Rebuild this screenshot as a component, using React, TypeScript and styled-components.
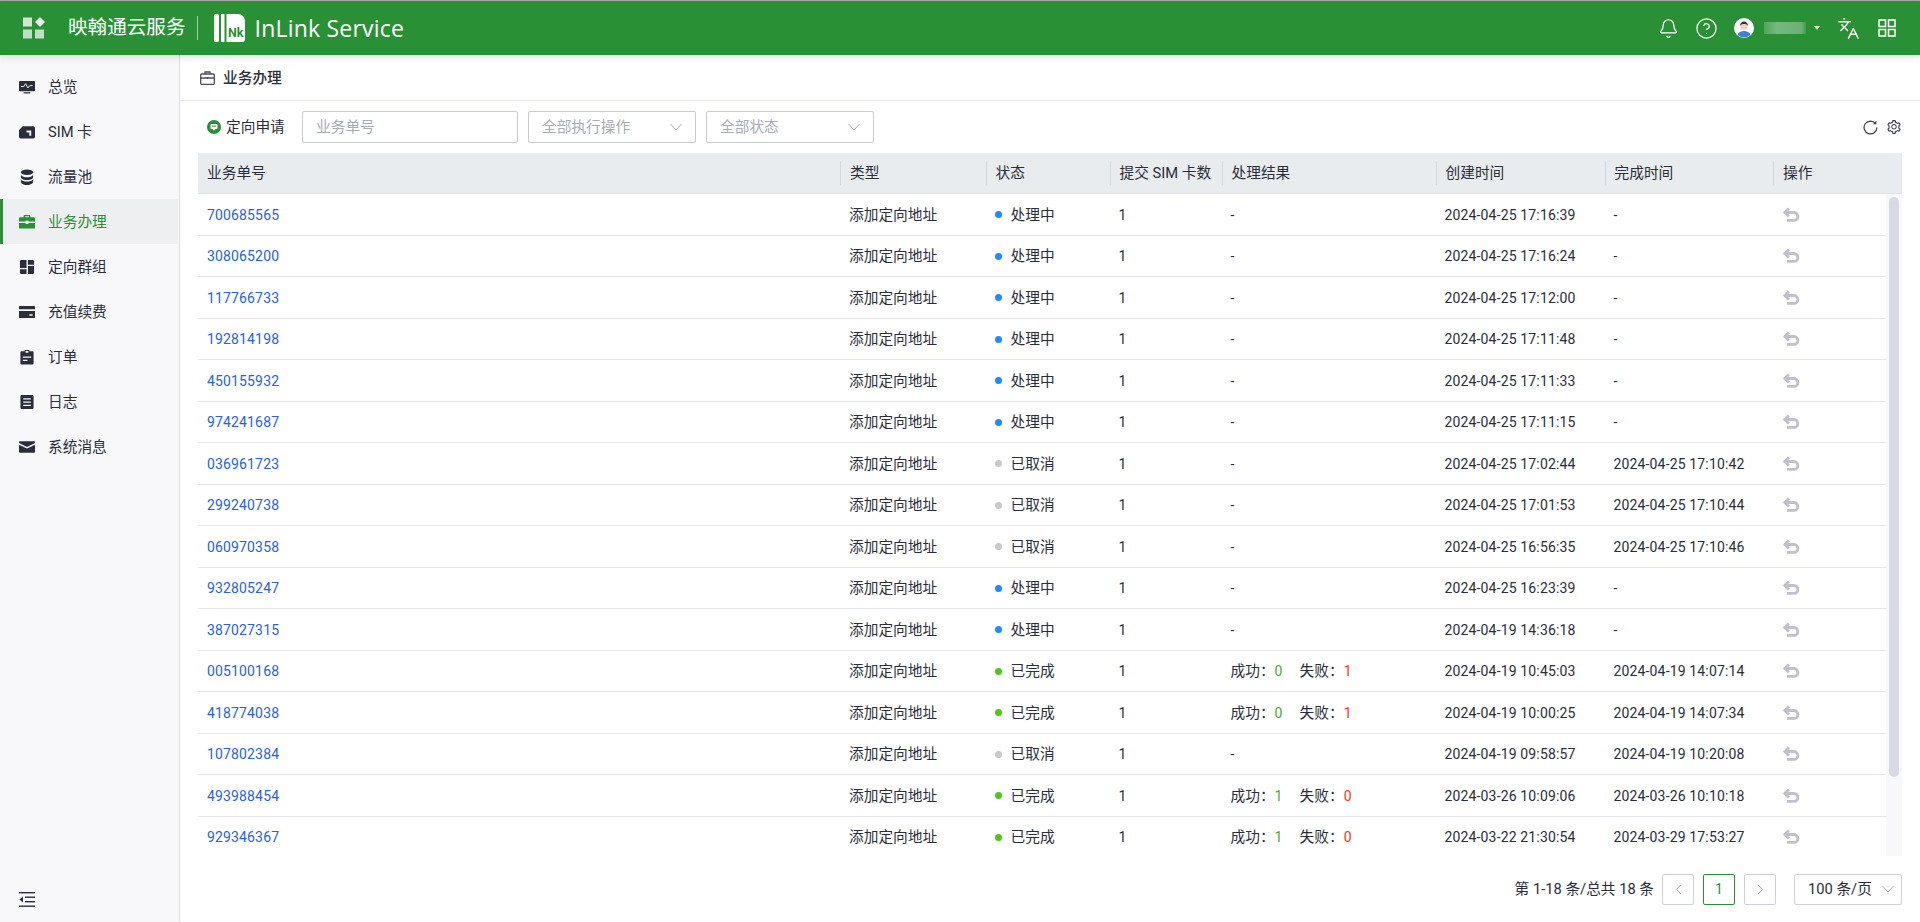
import React from 'react';
import styled, { createGlobalStyle } from 'styled-components';
import { Bell, CircleHelp, Languages, ChevronLeft, ChevronRight } from 'lucide-react';
import { AiOutlineSetting } from 'react-icons/ai';

const GlobalStyle = createGlobalStyle`
  html, body {
    margin: 0;
    padding: 0;
    height: 100%;
    overflow: hidden;
    background: #fff;
  }
  body {
    font-family: Roboto, "Noto Sans CJK SC", sans-serif;
    font-size: 14.7px;
    line-height: 22px;
    color: #2b2d3b;
  }
  * {
    box-sizing: border-box;
  }
`;

const COLUMNS = '642px 145.5px 124px 112px 214px 169px 168.5px 1fr';

const Page = styled.div`
  display: flex;
  flex-direction: column;
  height: 922px;
  border-top: 1px solid #a9aca9;
`;

const TopBar = styled.header`
  position: relative;
  z-index: 2;
  flex: none;
  display: flex;
  align-items: center;
  height: 54px;
  padding: 0 24px 0 23px;
  background: #2a9036;
  box-shadow: 0 2px 8px rgba(0, 0, 0, 0.12);
  color: #fff;
`;

const BrandName = styled.div`
  margin-left: 23px;
  font-size: 19.6px;
  line-height: 28px;
  white-space: nowrap;
`;

const BrandDivider = styled.div`
  width: 1px;
  height: 24px;
  margin: 0 16px 0 11px;
  background: rgba(255, 255, 255, 0.55);
`;

const LogoText = styled.div`
  margin-left: 10px;
  font-family: "Open Sans", sans-serif;
  font-size: 23px;
  line-height: 30px;
  letter-spacing: 0.2px;
  white-space: nowrap;
`;

const TopActions = styled.div`
  display: flex;
  align-items: center;
  margin-left: auto;
`;

const Avatar = styled.svg`
  width: 20px;
  height: 20px;
  margin-left: 16px;
`;

const HelpIcon = styled(CircleHelp)`
  margin-left: 16px;
`;

const GridSlot = styled.span`
  display: flex;
  margin-left: 18px;
`;

const HiddenName = styled.div`
  width: 42px;
  height: 12px;
  margin-left: 10px;
  background: linear-gradient(90deg, rgba(255, 255, 255, 0.18), rgba(255, 255, 255, 0.36) 30%, rgba(255, 255, 255, 0.3) 90%, rgba(255, 255, 255, 0.1));
`;

const Caret = styled.div`
  width: 0;
  height: 0;
  margin: 0 17px 0 8px;
  border-left: 3.5px solid transparent;
  border-right: 3.5px solid transparent;
  border-top: 4px solid rgba(255, 255, 255, 0.8);
`;

const Body = styled.div`
  flex: 1;
  min-height: 0;
  display: flex;
`;

const Sidebar = styled.aside`
  flex: none;
  display: flex;
  flex-direction: column;
  width: 180px;
  padding: 9px 1px 15px 0;
  background: #f8f8fb;
  border-right: 1px solid #dcdde3;
`;

const NavItem = styled.div<{ $active?: boolean }>`
  display: flex;
  align-items: center;
  gap: 13px;
  height: 45px;
  padding-left: ${(p) => (p.$active ? '16px' : '19px')};
  border-left: ${(p) => (p.$active ? '3px solid #2a9036' : '0')};
  background: ${(p) => (p.$active ? '#eeeff1' : 'transparent')};
  color: ${(p) => (p.$active ? '#2a9036' : '#2b2d3b')};
`;

const NavIcon = styled.svg`
  flex: none;
  width: 16px;
  height: 16px;
  fill: currentColor;
`;

const CollapseButton = styled.div`
  display: flex;
  margin-top: auto;
  padding-left: 19px;
  color: #2b2d3b;
`;

const Main = styled.main`
  flex: 1;
  min-width: 0;
  display: flex;
  flex-direction: column;
`;

const TitleBar = styled.div`
  flex: none;
  display: flex;
  align-items: center;
  gap: 8px;
  height: 46px;
  padding-left: 20px;
  border-bottom: 1px solid #e8e9ee;
  font-weight: 500;
  color: #2b2d3b;
`;

const Toolbar = styled.div`
  flex: none;
  display: flex;
  align-items: center;
  height: 52px;
  padding: 0 18px 0 27px;
`;

const ApplyButton = styled.div`
  display: flex;
  align-items: center;
  gap: 5px;
  width: 95px;
  white-space: nowrap;
`;

const Field = styled.div<{ $width: number }>`
  display: flex;
  align-items: center;
  justify-content: space-between;
  width: ${(p) => p.$width}px;
  height: 32px;
  margin-right: 10px;
  padding: 0 13px;
  border: 1px solid #c8cad4;
  border-radius: 2px;
  color: #a9abb6;
  background: #fff;
`;

const ToolIcons = styled.div`
  display: flex;
  align-items: center;
  gap: 8px;
  margin-left: auto;
  color: #3a3d4c;
`;

const TableHead = styled.div`
  flex: none;
  display: grid;
  grid-template-columns: ${COLUMNS};
  align-items: center;
  height: 41px;
  margin: 0 18px;
  background: #e9ecef;
  border-bottom: 1px solid #e0e2e8;
`;

const HeadCell = styled.div<{ $first?: boolean }>`
  height: 24px;
  padding-left: 9px;
  border-left: ${(p) => (p.$first ? '0' : '1px solid #d6d8de')};
  line-height: 24px;
  white-space: nowrap;
`;

const TableBody = styled.div`
  flex: 1;
  min-height: 0;
  display: flex;
  margin: 0 18px;
`;

const RowList = styled.div`
  flex: 1;
  min-width: 0;
  overflow: hidden;
`;

const ScrollTrack = styled.div`
  flex: none;
  width: 16px;
  padding: 3px;
  background: #f8f8fa;
`;

const ScrollThumb = styled.div`
  width: 10px;
  height: 580px;
  border-radius: 5px;
  background: #d7d9e6;
`;

const Row = styled.div`
  display: grid;
  grid-template-columns: ${COLUMNS};
  align-items: center;
  height: 41.5px;
  padding-top: 1px;
  border-bottom: 1px solid #e6e7ee;
`;

const Cell = styled.div`
  padding-left: 9px;
  white-space: nowrap;
`;

const Num = styled.span`
  font-size: 14px;
  letter-spacing: 0.15px;
`;

const OrderLink = styled(Num)`
  color: #2d62d6;
`;

const StatusCell = styled(Cell)`
  display: flex;
  align-items: center;
  gap: 9px;
`;

const Dot = styled.span<{ $color: string }>`
  width: 7px;
  height: 7px;
  border-radius: 50%;
  background: ${(p) => p.$color};
`;

const Count = styled(Num)<{ $color: string }>`
  color: ${(p) => p.$color};
`;

const FailLabel = styled.span`
  margin-left: 17px;
`;

const Footer = styled.div`
  flex: none;
  display: flex;
  align-items: center;
  justify-content: flex-end;
  height: 66px;
  padding: 0 18px 0 0;
`;

const Summary = styled.span`
  margin-right: 8px;
`;

const PageButton = styled.div<{ $active?: boolean }>`
  display: flex;
  align-items: center;
  justify-content: center;
  width: 32px;
  height: 31px;
  margin-left: ${(p) => (p.$active ? '9px' : '0')};
  margin-right: ${(p) => (p.$active ? '9px' : '0')};
  border: 1px solid ${(p) => (p.$active ? '#2a9036' : '#cfd1da')};
  border-radius: 2px;
  color: ${(p) => (p.$active ? '#2a9036' : '#8f919e')};
`;

const PageSize = styled.div`
  display: flex;
  align-items: center;
  justify-content: space-between;
  width: 108px;
  height: 31px;
  margin-left: 18px;
  padding: 0 7px 0 13px;
  border: 1px solid #cfd1da;
  border-radius: 2px;
`;

const ChevronSvg = styled.svg<{ $muted?: boolean }>`
  flex: none;
  width: 12px;
  height: 8px;
  fill: none;
  stroke: ${(p) => (p.$muted ? '#a9abb6' : 'currentColor')};
  stroke-width: 1;
`;

const Chevron = ({ muted }: { muted?: boolean }) => (
  <ChevronSvg viewBox="0 0 12 8" $muted={muted}>
    <polyline points="0.5,1 6,7 11.5,1" />
  </ChevronSvg>
);

const UndoSvg = styled.svg`
  display: block;
  width: 18px;
  height: 16px;
  fill: none;
  stroke: #bfc0ca;
  stroke-width: 2.8;
`;

const UndoIcon = () => (
  <UndoSvg viewBox="0 0 18 16">
    <path d="M6.8 1.5 L2.8 5.5 L6.8 9.5" />
    <path d="M3 5.5 H12 a3.8 3.8 0 0 1 0 7.8 H5" />
  </UndoSvg>
);

const BrandMark = () => (
  <svg width="22" height="22" viewBox="0 0 22 22">
    <rect x="0" y="0.5" width="9" height="9" fill="#fff" fillOpacity="0.78" />
    <polygon points="17,0 22,5 17,10 12,5" fill="#fff" fillOpacity="0.9" />
    <rect x="0" y="12.5" width="9" height="9" fill="#fff" fillOpacity="0.7" />
    <rect x="12" y="12.5" width="9" height="9" fill="#fff" fillOpacity="0.7" />
  </svg>
);

const InLinkMark = () => (
  <svg width="31" height="28" viewBox="0 0 31 28">
    <rect x="0" y="0" width="5" height="28" rx="1.5" fill="#fff" />
    <rect x="7" y="0" width="3.5" height="28" fill="#fff" />
    <path d="M12.5 0 H24 a7 7 0 0 1 7 7 V25 a3 3 0 0 1 -3 3 H12.5 Z" fill="#fff" />
    <text x="14" y="23" fontFamily="Roboto, sans-serif" fontWeight="700" fontSize="12.5" fill="#2a9036">Nk</text>
  </svg>
);

const AppGridIcon = () => (
  <svg width="18" height="18" viewBox="0 0 18 18" fill="none" stroke="#fff" strokeWidth="1.5">
    <rect x="1" y="1" width="6.5" height="6.5" />
    <rect x="10.5" y="1" width="6.5" height="6.5" />
    <rect x="1" y="10.5" width="6.5" height="6.5" />
    <rect x="10.5" y="10.5" width="6.5" height="6.5" />
  </svg>
);

const RefreshIcon = () => (
  <svg width="15" height="15" viewBox="0 0 15 15" fill="none" stroke="currentColor" strokeWidth="1.2">
    <path d="M12.6 3.6 A6.4 6.4 0 1 0 13.9 7.5" />
    <path d="M13.4 0.8 V4.2 H10" fill="currentColor" stroke="none" />
  </svg>
);

const BriefcaseOutline = () => (
  <svg width="15" height="14" viewBox="0 0 15 14" fill="none" stroke="#4a4d5c" strokeWidth="1.3">
    <rect x="0.7" y="3" width="13.6" height="10.3" rx="1" />
    <path d="M5 3 V1 H10 V3 M0.7 7 H14.3 M7.5 6 V8" />
  </svg>
);

const navIcons: Record<string, React.ReactNode> = {
  overview: (
    <>
      <path d="M1 2 h15 a1 1 0 0 1 1 1 v9 a1 1 0 0 1 -1 1 h-15 a1 1 0 0 1 -1 -1 v-9 a1 1 0 0 1 1 -1 Z M5 14 h7 v1.5 h-7 Z" />
      <path d="M2 8 h3 l2 -3 l2.5 4.5 l2 -2.5 h3" fill="none" stroke="#f8f8fb" strokeWidth="1" />
    </>
  ),
  sim: (
    <path fillRule="evenodd" d="M4 2.5 h11 a2 2 0 0 1 2 2 v9 a2 2 0 0 1 -2 2 h-13 a2 2 0 0 1 -2 -2 v-7 Z M8 7 h5 v5.5 h-2 v-3.5 h-3 Z" />
  ),
  pool: (
    <>
      <ellipse cx="8.5" cy="3.5" rx="6.5" ry="3" />
      <path d="M2 6 c1 2 4 2.8 6.5 2.8 s5.5 -.8 6.5 -2.8 v3 c-.6 2 -4 2.8 -6.5 2.8 s-5.9 -.8 -6.5 -2.8 Z" />
      <path d="M2 11 c1 2 4 2.4 6.5 2.4 s5.5 -.4 6.5 -2.4 v3 c-.6 2 -4 3 -6.5 3 s-5.9 -1 -6.5 -3 Z" />
    </>
  ),
  business: (
    <path fillRule="evenodd" d="M6 1 h5 a1 1 0 0 1 1 1 v1.5 h4 a1 1 0 0 1 1 1 v3.5 h-7 v-1 h-3 v1 h-7 v-3.5 a1 1 0 0 1 1 -1 h4 v-1.5 a1 1 0 0 1 1 -1 Z M6.5 2.3 v1.2 h4 v-1.2 Z M0 9.5 h7 v1 h3 v-1 h7 v5 a1 1 0 0 1 -1 1 h-15 a1 1 0 0 1 -1 -1 Z" />
  ),
  group: (
    <>
      <path d="M2.5 1 h5.5 v8.5 h-7 v-7 a1.5 1.5 0 0 1 1.5 -1.5 Z" />
      <path d="M9.5 1 h5 a1.5 1.5 0 0 1 1.5 1.5 v3.5 h-6.5 Z" />
      <path d="M9.5 7.5 h6.5 v7 a1.5 1.5 0 0 1 -1.5 1.5 h-5 Z" />
      <path d="M1 11 h7 v5 h-5.5 a1.5 1.5 0 0 1 -1.5 -1.5 Z" />
    </>
  ),
  topup: (
    <path fillRule="evenodd" d="M1 2 h15 a1 1 0 0 1 1 1 v2.5 h-17 v-2.5 a1 1 0 0 1 1 -1 Z M0 7.5 h17 v6.5 a1 1 0 0 1 -1 1 h-15 a1 1 0 0 1 -1 -1 Z M11 11 v1.5 h3.5 v-1.5 Z" />
  ),
  order: (
    <path fillRule="evenodd" d="M6 1 h5 v1.5 h3.5 a1 1 0 0 1 1 1 v12 a1 1 0 0 1 -1 1 h-12 a1 1 0 0 1 -1 -1 v-12 a1 1 0 0 1 1 -1 h3.5 Z M7 2 v2 h3 v-2 Z M4 8 v1.3 h9 v-1.3 Z M4 11.5 v1.3 h5 v-1.3 Z" />
  ),
  log: (
    <path fillRule="evenodd" d="M3 1 h11 a1.5 1.5 0 0 1 1.5 1.5 v12 a1.5 1.5 0 0 1 -1.5 1.5 h-11 a1.5 1.5 0 0 1 -1.5 -1.5 v-12 a1.5 1.5 0 0 1 1.5 -1.5 Z M4.5 4.5 v1.3 h8 v-1.3 Z M4.5 8 v1.3 h8 v-1.3 Z M4.5 11.5 v1.3 h8 v-1.3 Z" />
  ),
  message: (
    <path d="M1 2.5 h15 a1 1 0 0 1 1 1 v.8 l-8.5 4.2 l-8.5 -4.2 v-.8 a1 1 0 0 1 1 -1 Z M0 6 l8.5 4.2 l8.5 -4.2 v7.5 a1 1 0 0 1 -1 1 h-15 a1 1 0 0 1 -1 -1 Z" />
  ),
};

const navItems = [
  { key: 'overview', label: '总览' },
  { key: 'sim', label: 'SIM 卡' },
  { key: 'pool', label: '流量池' },
  { key: 'business', label: '业务办理', active: true },
  { key: 'group', label: '定向群组' },
  { key: 'topup', label: '充值续费' },
  { key: 'order', label: '订单' },
  { key: 'log', label: '日志' },
  { key: 'message', label: '系统消息' },
];

const statusColors: Record<string, string> = {
  处理中: '#1f8bff',
  已取消: '#c8c9ce',
  已完成: '#52c41a',
};

type Order = {
  id: string;
  status: string;
  ok?: number;
  fail?: number;
  created: string;
  done: string;
};

const orders: Order[] = [
  { id: '700685565', status: '处理中', created: '2024-04-25 17:16:39', done: '-' },
  { id: '308065200', status: '处理中', created: '2024-04-25 17:16:24', done: '-' },
  { id: '117766733', status: '处理中', created: '2024-04-25 17:12:00', done: '-' },
  { id: '192814198', status: '处理中', created: '2024-04-25 17:11:48', done: '-' },
  { id: '450155932', status: '处理中', created: '2024-04-25 17:11:33', done: '-' },
  { id: '974241687', status: '处理中', created: '2024-04-25 17:11:15', done: '-' },
  { id: '036961723', status: '已取消', created: '2024-04-25 17:02:44', done: '2024-04-25 17:10:42' },
  { id: '299240738', status: '已取消', created: '2024-04-25 17:01:53', done: '2024-04-25 17:10:44' },
  { id: '060970358', status: '已取消', created: '2024-04-25 16:56:35', done: '2024-04-25 17:10:46' },
  { id: '932805247', status: '处理中', created: '2024-04-25 16:23:39', done: '-' },
  { id: '387027315', status: '处理中', created: '2024-04-19 14:36:18', done: '-' },
  { id: '005100168', status: '已完成', ok: 0, fail: 1, created: '2024-04-19 10:45:03', done: '2024-04-19 14:07:14' },
  { id: '418774038', status: '已完成', ok: 0, fail: 1, created: '2024-04-19 10:00:25', done: '2024-04-19 14:07:34' },
  { id: '107802384', status: '已取消', created: '2024-04-19 09:58:57', done: '2024-04-19 10:20:08' },
  { id: '493988454', status: '已完成', ok: 1, fail: 0, created: '2024-03-26 10:09:06', done: '2024-03-26 10:10:18' },
  { id: '929346367', status: '已完成', ok: 1, fail: 0, created: '2024-03-22 21:30:54', done: '2024-03-29 17:53:27' },
];

const headers = ['业务单号', '类型', '状态', '提交 SIM 卡数', '处理结果', '创建时间', '完成时间', '操作'];

export default function App() {
  return (
    <Page>
      <GlobalStyle />
      <TopBar>
        <BrandMark />
        <BrandName>映翰通云服务</BrandName>
        <BrandDivider />
        <InLinkMark />
        <LogoText>InLink Service</LogoText>
        <TopActions>
          <Bell size={21} strokeWidth={1.4} />
          <HelpIcon size={23} strokeWidth={1.3} />
          <Avatar viewBox="0 0 20 20">
            <circle cx="10" cy="10" r="10" fill="#fff" />
            <path d="M3.5 17 c1 -3 3.5 -4 6.5 -4 s5.5 1 6.5 4 a10 10 0 0 1 -13 0 Z" fill="#3f7fdc" />
            <circle cx="10" cy="8.5" r="3.6" fill="#f3d3c0" />
            <path d="M6 8 c0 -3 2 -4.5 4 -4.5 s4 1.5 4 4.5 c-1 -1.5 -2 -2 -4 -2 s-3 .5 -4 2 Z" fill="#333" />
          </Avatar>
          <HiddenName />
          <Caret />
          <Languages size={23} strokeWidth={1.4} />
          <GridSlot>
            <AppGridIcon />
          </GridSlot>
        </TopActions>
      </TopBar>
      <Body>
        <Sidebar>
          {navItems.map((item) => (
            <NavItem key={item.key} $active={item.active}>
              <NavIcon viewBox="0 0 17 17">{navIcons[item.key]}</NavIcon>
              {item.label}
            </NavItem>
          ))}
          <CollapseButton>
            <svg width="16" height="15" viewBox="0 0 16 15" fill="#2b2d3b">
              <rect x="0" y="0" width="16" height="1.4" />
              <rect x="6" y="4.5" width="10" height="1.4" />
              <rect x="6" y="9" width="10" height="1.4" />
              <rect x="0" y="13.5" width="16" height="1.4" />
              <path d="M4 4.5 V10.5 L0.5 7.5 Z" />
            </svg>
          </CollapseButton>
        </Sidebar>
        <Main>
          <TitleBar>
            <BriefcaseOutline />
            业务办理
          </TitleBar>
          <Toolbar>
            <ApplyButton>
              <svg width="14" height="14" viewBox="0 0 14 14">
                <circle cx="7" cy="7" r="7" fill="#2a9036" />
                <rect x="3.5" y="4" width="7" height="5" rx="0.8" fill="#fff" />
                <rect x="5" y="5.6" width="4" height="1" fill="#2a9036" />
                <rect x="6" y="9" width="2" height="1.2" fill="#fff" />
              </svg>
              定向申请
            </ApplyButton>
            <Field $width={216}>业务单号</Field>
            <Field $width={168}>
              全部执行操作
              <Chevron />
            </Field>
            <Field $width={168}>
              全部状态
              <Chevron />
            </Field>
            <ToolIcons>
              <RefreshIcon />
              <AiOutlineSetting size={16} />
            </ToolIcons>
          </Toolbar>
          <TableHead>
            {headers.map((h, i) => (
              <HeadCell key={h} $first={i === 0}>
                {h}
              </HeadCell>
            ))}
          </TableHead>
          <TableBody>
            <RowList>
              {orders.map((o) => (
                <Row key={o.id}>
                  <Cell>
                    <OrderLink>{o.id}</OrderLink>
                  </Cell>
                  <Cell>添加定向地址</Cell>
                  <StatusCell>
                    <Dot $color={statusColors[o.status]} />
                    {o.status}
                  </StatusCell>
                  <Cell>
                    <Num>1</Num>
                  </Cell>
                  <Cell>
                    {o.ok === undefined ? (
                      <Num>-</Num>
                    ) : (
                      <>
                        成功：<Count $color="#52a52e">{o.ok}</Count>
                        <FailLabel>失败：</FailLabel>
                        <Count $color="#f5341f">{o.fail}</Count>
                      </>
                    )}
                  </Cell>
                  <Cell>
                    <Num>{o.created}</Num>
                  </Cell>
                  <Cell>
                    <Num>{o.done}</Num>
                  </Cell>
                  <Cell>
                    <UndoIcon />
                  </Cell>
                </Row>
              ))}
            </RowList>
            <ScrollTrack>
              <ScrollThumb />
            </ScrollTrack>
          </TableBody>
          <Footer>
            <Summary>第 1-18 条/总共 18 条</Summary>
            <PageButton>
              <ChevronLeft size={17} strokeWidth={1.2} />
            </PageButton>
            <PageButton $active>
              <Num>1</Num>
            </PageButton>
            <PageButton>
              <ChevronRight size={17} strokeWidth={1.2} />
            </PageButton>
            <PageSize>
              100 条/页
              <Chevron muted />
            </PageSize>
          </Footer>
        </Main>
      </Body>
    </Page>
  );
}
